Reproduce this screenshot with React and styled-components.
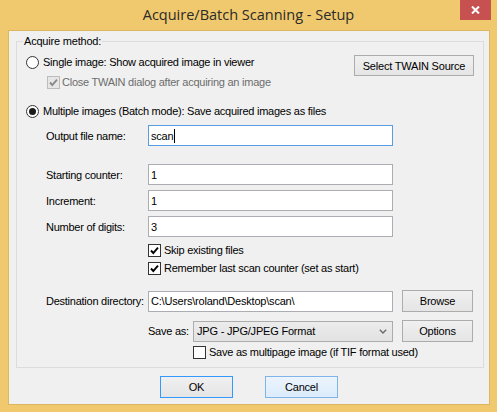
import React from 'react';
import styled, { createGlobalStyle } from 'styled-components';

const Global = createGlobalStyle`
  html, body { margin: 0; padding: 0; }
  body {
    background: #f0c86d;
    font-family: "Liberation Sans", Arial, sans-serif;
    font-size: 11px;
    color: #000;
  }
  * { box-sizing: border-box; }
`;

const Window = styled.div`
  width: 497px;
  height: 412px;
  background: #f0c86d;
  display: flex;
  flex-direction: column;
`;

const TitleBar = styled.div`
  height: 30px;
  flex: none;
  display: grid;
  grid-template-columns: 1fr auto 1fr;
  align-items: start;
`;

const Title = styled.div`
  grid-column: 2;
  font-family: "Open Sans", "Noto Sans", sans-serif;
  font-size: 14.5px;
  line-height: 30px;
  color: #2a2a2a;
  white-space: nowrap;
`;

const CloseButton = styled.div`
  grid-column: 3;
  justify-self: end;
  margin-right: 6px;
  width: 31px;
  height: 20px;
  background: #c75050;
  display: flex;
  align-items: center;
  justify-content: center;
`;

const Client = styled.div`
  flex: 1;
  margin: 0 7px 7px 8px;
  background: #f0f0f0;
  border: 1px solid #dcb660;
  padding: 4px 5px 0 7px;
  display: flex;
  flex-direction: column;
`;

const Group = styled.fieldset`
  margin: 0;
  min-width: 0;
  border: 1px solid #dcdcdc;
  padding: 0 9px 8px 9px;
  display: flex;
  flex-direction: column;
`;

const Legend = styled.legend`
  margin-left: -3px;
  padding: 0 1px;
  line-height: 13px;
  letter-spacing: -0.2px;
`;

const Row = styled.div`
  display: flex;
  align-items: center;
  margin-top: ${p => p.$mt || 0}px;
  padding-left: ${p => p.$indent || 0}px;
  height: ${p => p.$h || 13}px;
`;

const TopRow = styled(Row)`
  justify-content: space-between;
  align-items: flex-start;
`;

const Choice = styled.label`
  display: flex;
  align-items: center;
  height: 13px;
  margin-top: ${p => p.$mt || 0}px;
  gap: ${p => p.$gap || 3}px;
  color: ${p => (p.$disabled ? '#6d6d6d' : '#000')};
  letter-spacing: -0.25px;
  white-space: nowrap;
  line-height: 13px;
`;

const RadioCircle = styled.span`
  width: 13px;
  height: 13px;
  flex: none;
  border-radius: 50%;
  border: 1px solid #333;
  background: #fff;
  display: flex;
  align-items: center;
  justify-content: center;
  &::after {
    content: '';
    display: ${p => (p.$checked ? 'block' : 'none')};
    width: 7px;
    height: 7px;
    border-radius: 50%;
    background: #1a1a1a;
  }
`;

const CheckBox = styled.span`
  width: 13px;
  height: 13px;
  flex: none;
  border: 1px solid ${p => (p.$disabled ? '#bcbcbc' : '#333')};
  background: ${p => (p.$disabled ? '#e6e6e6' : '#fff')};
  display: flex;
  align-items: center;
  justify-content: center;
`;

const FieldLabel = styled.span`
  width: ${p => p.$w || 102}px;
  flex: none;
  white-space: nowrap;
  letter-spacing: -0.25px;
`;

const TextBox = styled.div`
  width: ${p => p.$w || 245}px;
  height: 21px;
  flex: none;
  background: #fff;
  border: 1px solid ${p => (p.$focused ? '#569de5' : '#abadb3')};
  display: flex;
  align-items: center;
  padding-left: 2px;
  letter-spacing: -0.2px;
  white-space: nowrap;
`;

const Caret = styled.span`
  display: inline-block;
  width: 1px;
  height: 14px;
  background: #000;
  margin-left: 1px;
`;

const Select = styled.div`
  width: 200px;
  height: 21px;
  flex: none;
  background: linear-gradient(#ececec, #e2e2e2);
  border: 1px solid #acacac;
  display: flex;
  align-items: center;
  justify-content: space-between;
  padding: 0 5px 0 3px;
  letter-spacing: -0.2px;
  white-space: nowrap;
`;

const Button = styled.div`
  width: ${p => p.$w || 71}px;
  height: ${p => p.$h || 22}px;
  flex: none;
  margin-left: ${p => p.$ml || 0}px;
  display: flex;
  align-items: center;
  justify-content: center;
  border: 1px solid ${p => (p.$variant === 'default' ? '#3399ff' : p.$variant === 'hover' ? '#7eb4ea' : '#acacac')};
  background: ${p =>
    p.$variant === 'hover'
      ? 'linear-gradient(#ecf4fc, #dcecfc)'
      : 'linear-gradient(#f0f0f0, #e5e5e5)'};
  letter-spacing: -0.2px;
  white-space: nowrap;
`;

const ButtonBar = styled.div`
  display: flex;
  justify-content: center;
  gap: 32px;
  margin-top: 8px;
  padding-right: 2px;
`;

const Check = ({ color = '#000' }) => (
  <svg width="11" height="11" viewBox="0 0 11 11">
    <path d="M2 5.5 L4.3 8 L9 2.6" fill="none" stroke={color} strokeWidth="1.9" />
  </svg>
);

const Chevron = () => (
  <svg width="8" height="5" viewBox="0 0 8 5">
    <path d="M0.8 0.8 L4 4 L7.2 0.8" fill="none" stroke="#6a6a6a" strokeWidth="1.4" />
  </svg>
);

const CloseX = () => (
  <svg width="9" height="8" viewBox="0 0 9 8">
    <path d="M1 0.5 L8 7.5 M8 0.5 L1 7.5" stroke="#fff" strokeWidth="2" />
  </svg>
);

export default function App() {
  return (
    <>
      <Global />
      <Window>
        <TitleBar>
          <Title>Acquire/Batch Scanning - Setup</Title>
          <CloseButton>
            <CloseX />
          </CloseButton>
        </TitleBar>
        <Client>
          <Group>
            <Legend>Acquire method:</Legend>
            <TopRow $mt={7} $h={21}>
              <Choice $gap={4} $mt={1}>
                <RadioCircle />
                Single image: Show acquired image in viewer
              </Choice>
              <Button $w={120} $h={21}>Select TWAIN Source</Button>
            </TopRow>
            <Row $indent={21}>
              <Choice $disabled $gap={2}>
                <CheckBox $disabled>
                  <Check color="#8a8a8a" />
                </CheckBox>
                Close TWAIN dialog after acquiring an image
              </Choice>
            </Row>
            <Row $mt={16}>
              <Choice $gap={4}>
                <RadioCircle $checked />
                Multiple images (Batch mode): Save acquired images as files
              </Choice>
            </Row>
            <Row $mt={7} $h={21} $indent={20}>
              <FieldLabel>Output file name:</FieldLabel>
              <TextBox $focused>
                scan
                <Caret />
              </TextBox>
            </Row>
            <Row $mt={18} $h={21} $indent={20}>
              <FieldLabel>Starting counter:</FieldLabel>
              <TextBox>1</TextBox>
            </Row>
            <Row $mt={5} $h={21} $indent={20}>
              <FieldLabel>Increment:</FieldLabel>
              <TextBox>1</TextBox>
            </Row>
            <Row $mt={5} $h={21} $indent={20}>
              <FieldLabel>Number of digits:</FieldLabel>
              <TextBox>3</TextBox>
            </Row>
            <Row $mt={7} $indent={122}>
              <Choice>
                <CheckBox>
                  <Check />
                </CheckBox>
                Skip existing files
              </Choice>
            </Row>
            <Row $mt={5} $indent={122}>
              <Choice>
                <CheckBox>
                  <Check />
                </CheckBox>
                Remember last scan counter (set as start)
              </Choice>
            </Row>
            <Row $mt={15} $h={22} $indent={20}>
              <FieldLabel>Destination directory:</FieldLabel>
              <TextBox>C:\Users\roland\Desktop\scan\</TextBox>
              <Button $ml={9}>Browse</Button>
            </Row>
            <Row $mt={8} $h={22} $indent={122}>
              <FieldLabel $w={45}>Save as:</FieldLabel>
              <Select>
                <span>JPG - JPG/JPEG Format</span>
                <Chevron />
              </Select>
              <Button $ml={9}>Options</Button>
            </Row>
            <Row $mt={4} $indent={167}>
              <Choice>
                <CheckBox />
                Save as multipage image (if TIF format used)
              </Choice>
            </Row>
          </Group>
          <ButtonBar>
            <Button $w={73} $variant="default">OK</Button>
            <Button $w={73} $variant="hover">Cancel</Button>
          </ButtonBar>
        </Client>
      </Window>
    </>
  );
}
